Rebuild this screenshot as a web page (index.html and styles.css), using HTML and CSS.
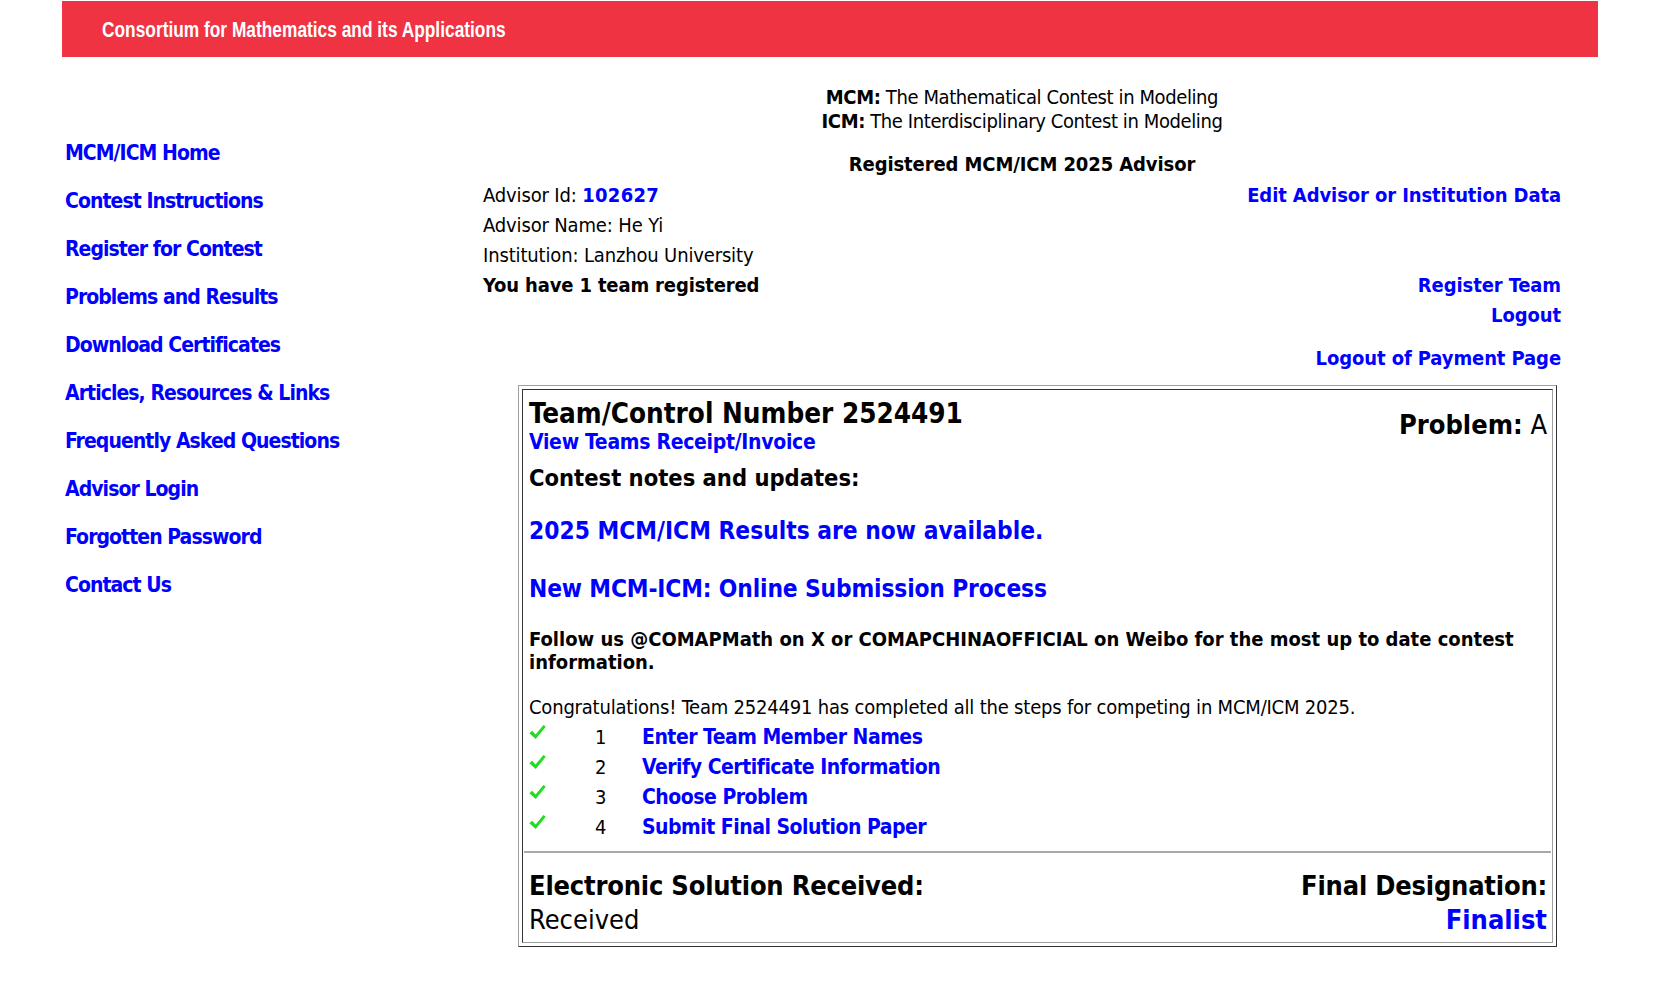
FILE: index.html
```html
<!DOCTYPE html>
<html lang="en">
<head>
<meta charset="utf-8">
<title>MCM/ICM Advisor</title>
<link rel="stylesheet" href="styles.css">
</head>
<body>
<header class="topbar"><span class="brand">Consortium for Mathematics and its Applications</span></header>
<div class="page">
  <nav class="sidenav">
    <a href="#">MCM/ICM Home</a>
    <a href="#">Contest Instructions</a>
    <a href="#">Register for Contest</a>
    <a href="#">Problems and Results</a>
    <a href="#">Download Certificates</a>
    <a href="#">Articles, Resources &amp; Links</a>
    <a href="#">Frequently Asked Questions</a>
    <a href="#">Advisor Login</a>
    <a href="#">Forgotten Password</a>
    <a href="#">Contact Us</a>
  </nav>
  <main class="main">
    <div class="intro">
      <div><b>MCM:</b> The Mathematical Contest in Modeling</div>
      <div><b>ICM:</b> The Interdisciplinary Contest in Modeling</div>
    </div>
    <div class="reg-title">Registered MCM/ICM 2025 Advisor</div>
    <div class="advisor-row">
      <div class="info">
        <div>Advisor Id: <a href="#">102627</a></div>
        <div>Advisor Name: He Yi</div>
        <div>Institution: Lanzhou University</div>
        <div class="strong">You have 1 team registered</div>
      </div>
      <div class="actions">
        <a href="#">Edit Advisor or Institution Data</a>
        <a href="#" class="act-register">Register Team</a>
        <a href="#">Logout</a>
        <a href="#" class="act-payment">Logout of Payment Page</a>
      </div>
    </div>
    <div class="teambox">
      <div class="teambox-inner">
        <div class="team-head">
          <div>
            <div class="team-num">Team/Control Number 2524491</div>
            <a href="#" class="receipt">View Teams Receipt/Invoice</a>
          </div>
          <div class="problem"><b>Problem:</b> A</div>
        </div>
        <div class="notes-title">Contest notes and updates:</div>
        <a href="#" class="news news-first">2025 MCM/ICM Results are now available.</a>
        <a href="#" class="news news-second">New MCM-ICM: Online Submission Process</a>
        <p class="follow">Follow us @COMAPMath on X or COMAPCHINAOFFICIAL on Weibo for the most up to date contest information.</p>
        <p class="congrats">Congratulations! Team 2524491 has completed all the steps for competing in MCM/ICM 2025.</p>
        <div class="steps">
          <svg class="tick" viewBox="0 0 16 16"><path d="M0.3 8.6 L3 6.4 L6.2 9.8 L13.6 0.9 L15.8 2.7 L6.3 14.2 Z"/></svg>
          <span class="num">1</span><a href="#">Enter Team Member Names</a>
          <svg class="tick" viewBox="0 0 16 16"><path d="M0.3 8.6 L3 6.4 L6.2 9.8 L13.6 0.9 L15.8 2.7 L6.3 14.2 Z"/></svg>
          <span class="num">2</span><a href="#">Verify Certificate Information</a>
          <svg class="tick" viewBox="0 0 16 16"><path d="M0.3 8.6 L3 6.4 L6.2 9.8 L13.6 0.9 L15.8 2.7 L6.3 14.2 Z"/></svg>
          <span class="num">3</span><a href="#">Choose Problem</a>
          <svg class="tick" viewBox="0 0 16 16"><path d="M0.3 8.6 L3 6.4 L6.2 9.8 L13.6 0.9 L15.8 2.7 L6.3 14.2 Z"/></svg>
          <span class="num">4</span><a href="#">Submit Final Solution Paper</a>
        </div>
        <div class="rule"></div>
        <div class="result-row">
          <div>
            <div class="res-label">Electronic Solution Received:</div>
            <div class="res-value">Received</div>
          </div>
          <div class="right">
            <div class="res-label">Final Designation:</div>
            <a href="#" class="res-value final">Finalist</a>
          </div>
        </div>
      </div>
    </div>
  </main>
</div>
</body>
</html>
```

FILE: styles.css
```css
html, body {
  margin: 0;
  padding: 0;
  background: #ffffff;
}
body {
  font-family: "DejaVu Sans Condensed", "DejaVu Sans", sans-serif;
  color: #000;
}
a {
  color: #0000ff;
  text-decoration: none;
  font-weight: bold;
}
.topbar {
  margin: 1px 0 0 62px;
  width: 1536px;
  height: 56px;
  background: #ef3343;
  display: flex;
  align-items: center;
  padding-left: 40px;
  box-sizing: border-box;
}
.brand {
  color: #fff;
  font-family: "Liberation Sans", Arial, sans-serif;
  font-weight: bold;
  font-size: 22.5px;
  display: inline-block;
  transform: scaleX(0.77);
  transform-origin: left center;
  white-space: nowrap;
  padding-top: 2px;
}
.page {
  display: flex;
  margin-left: 65px;
}
.sidenav {
  width: 418px;
  display: flex;
  flex-direction: column;
  padding-top: 83px;
}
.sidenav a {
  font-size: 21px;
  line-height: 26px;
  margin-bottom: 22px;
  letter-spacing: -0.95px;
}
.main {
  width: 1078px;
  padding-top: 28px;
}
.intro {
  text-align: center;
  font-size: 20px;
  line-height: 24px;
  letter-spacing: -0.4px;
}
.reg-title {
  text-align: center;
  font-weight: bold;
  font-size: 20px;
  line-height: 24px;
  margin-top: 19px;
  letter-spacing: -0.1px;
}
.advisor-row {
  display: flex;
  justify-content: space-between;
  margin-top: 4px;
}
.info {
  font-size: 20px;
  line-height: 30px;
  letter-spacing: -0.15px;
}
.info a { font-size: 20px; letter-spacing: 0.3px; }
.strong { font-weight: bold; }
.actions {
  display: flex;
  flex-direction: column;
  align-items: flex-end;
  font-size: 20px;
  line-height: 30px;
  letter-spacing: -0.1px;
}
.act-register { margin-top: 60px; }
.act-payment { margin-top: 13px; }
.teambox {
  margin: 12px 4px 0 35px;
  border: 1px solid;
  border-color: #a0a0a0 #333 #333 #a0a0a0;
  padding: 3px;
}
.teambox-inner {
  border: 1px solid;
  border-color: #333 #a0a0a0 #a0a0a0 #333;
  padding: 8px 5px 5px 6px;
  display: flex;
  flex-direction: column;
  align-items: flex-start;
}
.team-head {
  display: flex;
  justify-content: space-between;
  align-items: center;
  align-self: stretch;
}
.team-num {
  font-weight: bold;
  font-size: 27.6px;
  line-height: 32px;
}
.receipt {
  font-size: 21px;
  line-height: 24px;
  display: block;
  letter-spacing: -0.3px;
}
.problem {
  font-size: 27px;
  margin-top: -3px;
}
.notes-title {
  font-weight: bold;
  font-size: 23.5px;
  line-height: 28px;
  margin-top: 10px;
}
.news {
  font-size: 24.3px;
  line-height: 30px;
}
.news-first { margin-top: 24px; }
.news-second {
  margin-top: 28px;
  letter-spacing: -0.15px;
}
.follow {
  font-weight: bold;
  font-size: 20px;
  line-height: 23px;
  margin: 24px 0 0 0;
}
.congrats {
  font-size: 20px;
  line-height: 26px;
  margin: 20px 0 0 0;
  letter-spacing: -0.2px;
}
.steps {
  display: grid;
  grid-template-columns: 66px 47px auto;
  grid-auto-rows: 30px;
  align-items: center;
  margin-top: 2px;
}
.tick {
  width: 17px;
  height: 17px;
  fill: #22dd22;
  margin-top: -9px;
}
.num {
  font-size: 20px;
}
.steps a {
  font-size: 21px;
  letter-spacing: -0.5px;
}
.rule {
  align-self: stretch;
  height: 2px;
  background: #a8a8a8;
  margin: 9px -4px 0 -5px;
}
.result-row {
  display: flex;
  justify-content: space-between;
  align-self: stretch;
  margin-top: 16px;
}
.right {
  text-align: right;
  display: flex;
  flex-direction: column;
  align-items: flex-end;
}
.res-label {
  font-weight: bold;
  font-size: 27px;
  line-height: 34px;
  letter-spacing: -0.2px;
}
.res-value {
  font-size: 27px;
  line-height: 34px;
}
.final { font-weight: bold; }
```
